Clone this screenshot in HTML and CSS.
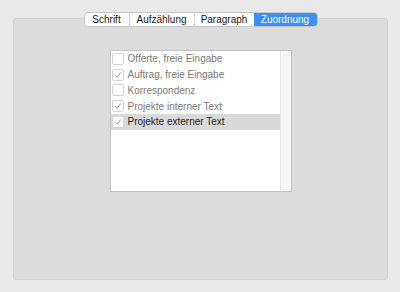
FILE: index.html
```html
<!DOCTYPE html>
<html>
<head>
<meta charset="utf-8">
<link rel="stylesheet" href="styles.css">
</head>
<body>
<div class="window">
  <div class="tabs">
    <div class="tab t1">Schrift</div>
    <div class="tab t2">Aufzählung</div>
    <div class="tab t3">Paragraph</div>
    <div class="tab t4 active">Zuordnung</div>
  </div>
  <div class="panel">
    <div class="list">
      <div class="rows">
        <div class="row"><span class="cb"></span><span class="label">Offerte, freie Eingabe</span></div>
        <div class="row"><span class="cb"><svg viewBox="0 0 10 10" width="10" height="10"><path d="M2.3 5.3 L4.1 7.3 L7.8 2.4" fill="none" stroke="#9a9a9a" stroke-width="1"/></svg></span><span class="label">Auftrag, freie Eingabe</span></div>
        <div class="row"><span class="cb"></span><span class="label">Korrespondenz</span></div>
        <div class="row"><span class="cb"><svg viewBox="0 0 10 10" width="10" height="10"><path d="M2.3 5.3 L4.1 7.3 L7.8 2.4" fill="none" stroke="#9a9a9a" stroke-width="1"/></svg></span><span class="label">Projekte interner Text</span></div>
        <div class="row selected"><span class="cb"><svg viewBox="0 0 10 10" width="10" height="10"><path d="M2.3 5.3 L4.1 7.3 L7.8 2.4" fill="none" stroke="#9a9a9a" stroke-width="1"/></svg></span><span class="label">Projekte externer Text</span></div>
      </div>
      <div class="scroll"></div>
    </div>
  </div>
</div>
</body>
</html>
```
FILE: styles.css
```css
html, body {
  margin: 0;
  padding: 0;
  background: #e9e9e9;
  width: 400px;
  height: 292px;
  overflow: hidden;
  font-family: "Liberation Sans", Arial, sans-serif;
}
.window {
  display: flex;
  flex-direction: column;
  align-items: center;
  padding-top: 12px;
}
.tabs {
  display: flex;
  height: 15px;
  position: relative;
  z-index: 1;
  margin-left: 1px;
  border: 1px solid #c6c6c6;
  border-radius: 4px;
  background: #fff;
  box-sizing: border-box;
  overflow: hidden;
}
.tab {
  box-sizing: border-box;
  font-size: 10px;
  line-height: 13px;
  color: #1a1a1a;
  text-align: center;
  border-left: 1px solid #d2d2d2;
}
.t1 { width: 44px; border-left: none; }
.t2 { width: 65px; }
.t3 { width: 60px; }
.t4 { width: 63px; border-left: none; }
.tab.active {
  background: #3c8ff7;
  color: #fff;
}
.panel {
  margin-top: -9px;
  width: 375px;
  height: 262px;
  box-sizing: border-box;
  background: #dcdcdc;
  border: 1px solid #d3d3d3;
  border-radius: 3px;
  display: flex;
  justify-content: center;
  padding-top: 31px;
  padding-left: 1px;
}
.list {
  width: 182px;
  height: 142px;
  box-sizing: border-box;
  border: 1px solid #c3c3c3;
  background: #fff;
  display: flex;
}
.rows {
  flex: 1;
}
.row {
  height: 15.75px;
  display: flex;
  align-items: center;
  padding-left: 1px;
}
.row.selected {
  background: #d9d9d9;
}
.cb {
  width: 10px;
  height: 10px;
  border: 1px solid #d4d4d4;
  border-radius: 2px;
  background: #fff;
  display: block;
  flex: none;
}
.cb svg { display: block; }
.label {
  margin-left: 4px;
  font-size: 10px;
  color: #7a7a7a;
}
.selected .label { color: #1e1e1e; }
.scroll {
  width: 10px;
  background: #f6f6f6;
  border-left: 1px solid #e6e6e6;
}
```
